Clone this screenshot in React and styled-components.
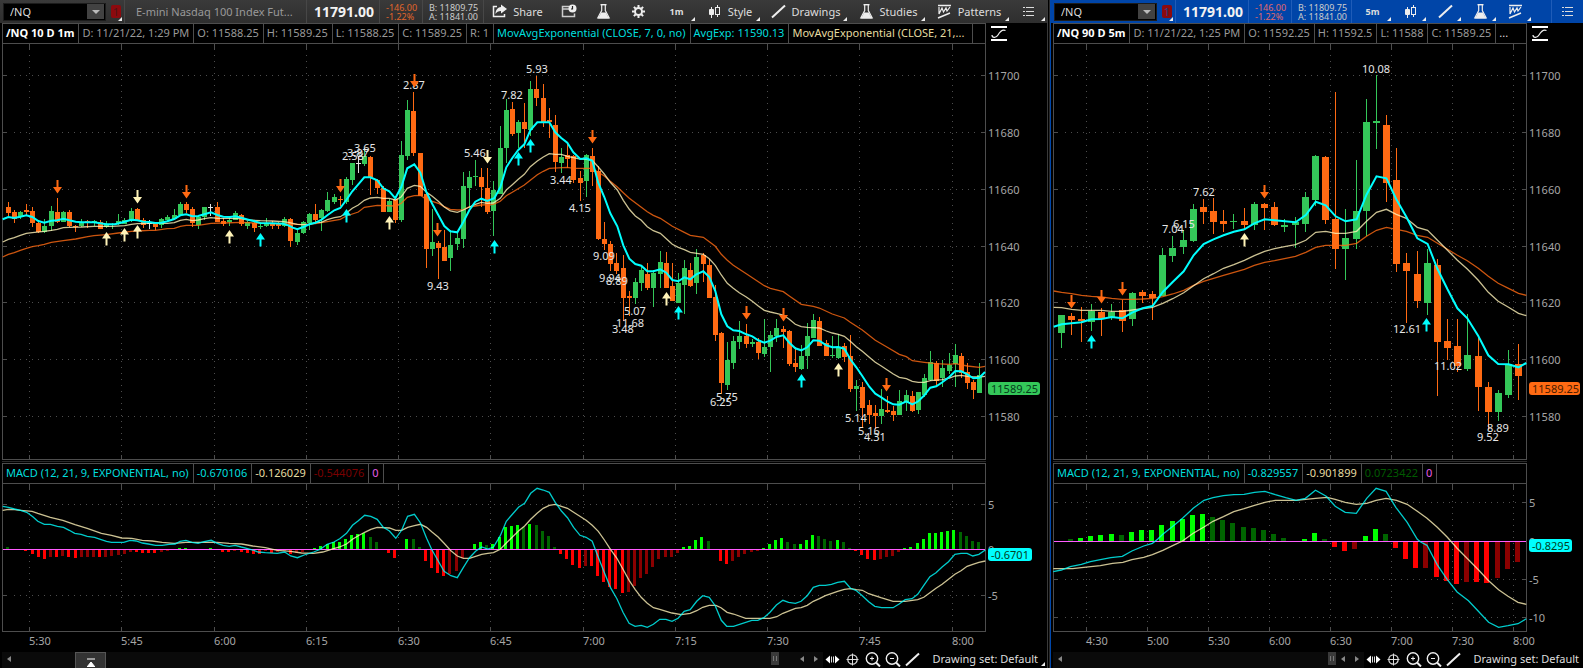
import React, { useLayoutEffect, useRef, useState } from 'react';
import styled, { createGlobalStyle } from 'styled-components';

const GREEN = '#34c759';
const ORANGE = '#ff6a13';
const CREAM = '#fff3b8';
const CYAN = '#00ffff';
const FRAME = '#4d4d4d';

const GlobalStyle = createGlobalStyle`
  * {
    box-sizing: border-box;
  }

  body {
    margin: 0;
    background: #000;
    color: #ddd;
    font-family: "Noto Sans", "Open Sans", sans-serif;
    font-size: 11px;
    line-height: 14px;
  }

  button, input {
    font: inherit;
    color: inherit;
  }
`;

const Workspace = styled.main`
  display: flex;
  height: 100vh;
  min-height: 400px;
  overflow: hidden;
`;

const Panel = styled.section`
  flex: ${(p) => p.$grow} 1 ${(p) => p.$grow}px;
  min-width: 0;
  display: flex;
  flex-direction: column;
  border-left: ${(p) => (p.$active ? '1px solid #0047ab' : 'none')};
`;

const Divider = styled.div`
  flex: none;
  width: 3px;
  border-left: 1px solid #3a3a3a;
  border-right: 1px solid #2a2a2a;
`;

const Toolbar = styled.div`
  flex: none;
  display: flex;
  height: 23px;
  color: #ddd;
  background: ${(p) => (p.$active ? '#0045a8' : 'linear-gradient(#3a3a3a, #2e2e2e)')};

  & > * {
    border-right: 1px solid ${(p) => (p.$active ? '#1f5cb8' : '#474747')};
  }

  & > *:last-child {
    border-right: none;
  }
`;

const SymbolGroup = styled.form`
  flex: none;
  display: flex;
  align-items: center;
  gap: 5px;
  width: 125px;
  padding-left: 3px;
  position: relative;
`;

const SymbolBox = styled.div`
  display: flex;
  align-items: center;
  width: 103px;
  height: 18px;
  padding-right: 1px;
  background: #000;
  border: 1px solid #1c1c1c;
`;

const SymbolInput = styled.input`
  flex: 1;
  min-width: 0;
  height: 16px;
  padding: 0 0 0 6px;
  border: none;
  outline: none;
  background: transparent;
`;

const DropButton = styled.button`
  display: flex;
  align-items: center;
  justify-content: center;
  width: 17px;
  height: 15px;
  padding: 0;
  border: none;
  background: #424242;
`;

const LinkBadge = styled.button`
  width: 10px;
  height: 13px;
  padding: 0;
  border: none;
  border-radius: 2px;
  background: #8c0a0e;
  color: ${(p) => (p.$active ? '#2b3f8c' : '#4d1518')};
  line-height: 13px;
`;

const Corner = styled.span`
  position: absolute;
  right: 2px;
  bottom: 2px;
  border-left: 4px solid transparent;
  border-bottom: 4px solid #eee;
`;

const Description = styled.div`
  flex: 1;
  min-width: 0;
  padding: 0 11px;
  line-height: 23px;
  color: #999;
  white-space: nowrap;
  overflow: hidden;
`;

const LastPrice = styled.div`
  flex: none;
  width: 73px;
  padding-left: 7px;
  font-size: 14px;
  font-weight: 700;
  line-height: 24px;
  color: #f2f2f2;
`;

const Stack = styled.div`
  flex: none;
  display: flex;
  flex-direction: column;
  justify-content: center;
  width: ${(p) => p.$width}px;
  padding-left: 6px;
  font-size: 9px;
  line-height: 9px;
  color: ${(p) => p.$color};
  white-space: nowrap;
`;

const ToolButton = styled.button`
  flex: none;
  position: relative;
  display: flex;
  align-items: center;
  justify-content: center;
  gap: 5px;
  width: ${(p) => p.$width}px;
  padding: 0;
  border: none;
  background: transparent;
  font-size: ${(p) => (p.$period ? 9 : 11)}px;
  font-weight: ${(p) => (p.$period ? 700 : 400)};
`;

const Filler = styled.div`
  flex: 1;
`;

const Body = styled.div`
  flex: 1;
  min-height: 0;
  display: flex;
  flex-direction: column;
  padding-left: 2px;
`;

const HeaderRow = styled.div`
  flex: none;
  display: flex;
  height: 21px;
`;

const HeaderCells = styled.dl`
  flex: 1;
  min-width: 0;
  display: flex;
  margin: 0;
  overflow: hidden;
  border: 1px solid ${FRAME};
`;

const HeaderCell = styled.div`
  flex: ${(p) => (p.$fill ? '1 1 0' : 'none')};
  min-width: 0;
  padding: 0 4px 0 3px;
  border-right: ${(p) => (p.$open ? 'none' : `1px solid ${FRAME}`)};
  margin-right: ${(p) => (p.$fill && !p.$open ? 12 : 0)}px;
  color: ${(p) => p.$color || '#999'};
  font-weight: ${(p) => (p.$bold ? 700 : 400)};
  line-height: 18px;
  white-space: nowrap;
  overflow: hidden;
`;

const HeaderSide = styled.div`
  flex: none;
  width: ${(p) => p.$width}px;
  padding: 3px 0 0 5px;
`;

const CurveButton = styled.button`
  display: block;
  padding: 0;
  border: none;
  background: none;
`;

const Splitter = styled.div`
  flex: none;
  height: 3px;
  margin-right: ${(p) => p.$side}px;
  border-bottom: 1px solid #000;
  background: #2a2a2a;
  border-top: 1px solid #000;
`;

const ChartBox = styled.div`
  flex: ${(p) => p.$grow} 1 0;
  min-height: 0;
  overflow: hidden;

  svg {
    display: block;
  }

  text {
    font-size: 11px;
    fill: #a6a6a6;
  }

  text.note {
    fill: #e6e6e6;
    text-anchor: middle;
  }

  text.tag {
    fill: ${(p) => p.$tagText};
  }
`;

const BottomBar = styled.div`
  flex: none;
  display: flex;
  align-items: flex-start;
  height: 16px;
  padding-left: 2px;
`;

const ScrollTrack = styled.div`
  flex: 1;
  display: flex;
  align-items: flex-start;
  align-self: stretch;
  background: #0a0a0a;
`;

const ScrollButton = styled.button`
  display: flex;
  align-items: center;
  justify-content: center;
  width: 14px;
  height: 13px;
  padding: 0;
  border: none;
  background: none;
`;

const CollapseButton = styled.button`
  display: flex;
  align-items: center;
  justify-content: center;
  width: 31px;
  height: 16px;
  margin-left: 59px;
  padding: 3px 0 0;
  border: 1px solid #555;
  border-bottom: none;
  background: #333;
`;

const Thumb = styled.div`
  width: 8px;
  height: 13px;
  margin: 0 ${(p) => p.$gap}px 0 auto;
  background: repeating-linear-gradient(90deg, #3a3a3a 0 2px, #777 2px 3px);
  border: solid #3a3a3a;
  border-width: 4px 0;
`;

const ChartTools = styled.div`
  flex: none;
  display: flex;
  align-items: center;
  gap: 4px;
  height: 15px;
  padding: 0 12px 0 2px;
`;

const IconButton = styled.button`
  display: flex;
  padding: 0;
  border: none;
  background: none;
`;

const DrawingSet = styled.button`
  position: relative;
  flex: none;
  height: 16px;
  padding: 0 ${(p) => p.$gap}px 2px 0;
  border: none;
  background: none;
  line-height: 14px;
`;

const ICONS = {
  share: (
    <>
      <path d="M5 2.5H1.5v10h11V10" fill="none" stroke="#eee" strokeWidth="1.5" />
      <path d="M9 0.5l6 4.5-6 4.5V7C6.500 7 4.500 8 3.500 10 3.500 6 6 3.200 9 3z" fill="#eee" />
    </>
  ),
  history: (
    <>
      <path d="M8 2.500H1.500v10h12V9.500M1.500 5H8" fill="none" stroke="#ccc" strokeWidth="1.5" />
      <circle cx="11.500" cy="4.500" r="4" fill="#eee" />
      <path d="M11.500 2v3h-1.500" fill="none" stroke="#222" strokeWidth="1.200" />
    </>
  ),
  flask: (
    <>
      <path d="M4.500 0.700h6" stroke="#eee" strokeWidth="1.400" />
      <path d="M5.700 1v5.500L1.800 13.800h11.400L9.300 6.500V1" fill="none" stroke="#eee" strokeWidth="1.200" />
      <path d="M5.200 8.500h4.600l3.200 6H2z" fill="#eee" />
    </>
  ),
  gear: (
    <>
      <circle cx="7.500" cy="7.500" r="3.500" fill="none" stroke="#eee" strokeWidth="2" />
      <path
        d="M7.500 1v2.500M7.500 11.500V14M1 7.500h2.500M11.500 7.500H14M2.900 2.900l1.800 1.800M10.300 10.300l1.800 1.800M12.100 2.900l-1.800 1.800M4.700 10.300l-1.800 1.800"
        stroke="#eee"
        strokeWidth="2"
      />
    </>
  ),
  style: (
    <>
      <path d="M4.500 3v11M10.500 1v3M10.500 10v3" stroke="#eee" />
      <rect x="2" y="5" width="5" height="6" rx="1" fill="#eee" />
      <rect x="8.500" y="3.500" width="4" height="7" fill="none" stroke="#eee" />
    </>
  ),
  line: <path d="M1 13.500L14 1.500" stroke="#eee" strokeWidth="2" />,
  patterns: (
    <>
      <path d="M1 1.500h13M1 14l12-5" stroke="#eee" strokeWidth="1.500" />
      <path d="M2 3v7l3-6 1.500 4L9 4l1 3 3-4" fill="none" stroke="#eee" strokeWidth="1.200" />
    </>
  ),
  list: (
    <path
      d="M2 3.500h2M2 7.500h2M2 11.500h2M5 3.500h8M5 7.500h8M5 11.500h8"
      stroke="#ddd"
      strokeWidth="1.200"
    />
  ),
  curve: (
    <>
      <path d="M0 1h16M0 14h16" stroke="#fff" strokeWidth="2" />
      <path d="M1 9c0 3 4 3.500 6 0s4-6 7.500-4.500" fill="none" stroke="#eee" strokeWidth="1.200" />
    </>
  ),
  pan: (
    <>
      <path d="M0.500 7.500L5 3.500v8zM14.500 7.500L10 3.500v8z" fill="#fff" />
      <path d="M6.500 4.500v6M8.500 4.500v6" stroke="#ddd" />
    </>
  ),
  target: (
    <>
      <circle cx="7.500" cy="7.500" r="4.700" fill="none" stroke="#ddd" strokeWidth="1.200" />
      <path d="M7.500 1.500v12M1.500 7.500h12" stroke="#ddd" />
    </>
  ),
  zoomIn: (
    <>
      <circle cx="7" cy="6.500" r="5.700" fill="none" stroke="#eee" strokeWidth="1.400" />
      <path d="M7 4.500v4M5 6.500h4" stroke="#eee" />
      <path d="M11 10.500l4 4" stroke="#eee" strokeWidth="2" />
    </>
  ),
  zoomOut: (
    <>
      <circle cx="7" cy="6.500" r="5.700" fill="none" stroke="#eee" strokeWidth="1.400" />
      <path d="M5 6.500h4" stroke="#eee" />
      <path d="M11 10.500l4 4" stroke="#eee" strokeWidth="2" />
    </>
  ),
};

const Icon = ({ name, size = 15 }) => (
  <svg width={size + 1} height={size} viewBox={`0 0 ${size + 1} ${size}`} aria-hidden="true">
    {ICONS[name]}
  </svg>
);

// x, y pairs separated by spaces; offset shifts every x
const pts = (text, offset = 0) =>
  text.trim().split(/\s+/).map((pair) => {
    const [x, y] = pair.split(',').map(Number);
    return [x + offset, y];
  });

// colour, x, high, body top, body bottom, low
const candles = (text, offset = 0) =>
  text.trim().split(/\s+/).map((item) => {
    const [x, high, top, bottom, low] = item.slice(1).split(',').map(Number);
    return { kind: item[0], x: x + offset, high, top, bottom, low };
  });

const minuteCandles = [
  ...candles(`O25,426,441,459,470 O43,450,456,479,491 G61,453,456,473,478 O79,432,450,456,466
    O97,441,453,491,503 O115,486,489,517,521 G133,477,500,518,520 G154,438,453,500,515
    O172,414,456,486,491 G190,453,456,487,488 O208,450,456,498,503 O227,495,498,501,516
    G245,477,486,500,503 O263,480,484,487,504 G282,482,484,488,498 O301,480,486,507,508
    G319,484,496,503,506 G337,490,494,497,509 G355,462,483,494,496 G374,476,480,492,494
    G394,444,453,483,486 O412,444,447,480,484 O430,474,482,495,506 W448,480,490,493,508
    O466,486,490,501,510 G484,476,478,497,506 G502,466,471,480,484 G523,447,465,479,482
    G541,426,432,466,470 O559,428,432,450,459 O577,441,447,491,503 G595,470,473,495,509
    G613,441,441,473,480 W631,432,441,444,468 O652,426,441,486,488 O670,474,483,492,500
    G688,474,480,486,498 G706,453,459,480,482 O724,462,465,494,500 G742,484,488,500,509
    O763,488,490,506,517 G781,492,498,503,509 G799,476,490,500,502 O817,484,490,498,508
    O835,486,491,500,509 G853,471,477,500,502 O871,476,477,545,563 G892,508,519,548,556
    G910,484,486,521,524 G928,459,462,489,512 O946,432,462,480,494 G964,447,450,474,515
    G982,396,420,455,456 G1003,402,411,426,432 O1021,408,417,422,440`),
  ...candles(`G79,351,357,426,432 G97,309,309,360,375 W115,288,309,312,339 G133,264,288,312,320
    O151,288,291,351,405 O172,357,360,384,403 O190,380,384,456,458 G208,417,423,456,458
    O226,414,418,480,490 G244,243,285,480,487 G262,120,150,288,300 O280,96,153,281,289
    O301,279,279,408,410 O319,400,402,567,626 G337,447,546,567,590 O355,543,549,564,658
    O373,510,561,603,605 G391,510,555,594,635 G412,516,534,552,570 G430,338,378,537,566
    G448,333,351,384,444 G466,300,348,353,378 O484,324,351,381,442 O502,324,384,456,464
    G520,364,390,453,530 G541,198,264,402,404 G559,117,150,264,310 O577,126,147,222,230
    G595,181,186,219,265 O613,129,186,207,266 G631,63,87,210,228 O649,48,87,114,138
    O670,72,114,187,203 O688,144,180,187,236 O706,165,195,306,338 G724,264,291,309,340
    O742,246,286,297,324 O760,285,290,360,369 O781,333,354,369,423 G799,283,285,363,411
    O817,265,288,336,378 O835,320,333,537,542 O853,486,537,552,570 O871,543,552,612,633
    O889,579,609,633,643 O910,585,624,714,784 O928,693,708,714,770 G946,655,666,714,734
    G964,618,630,669,695 O982,609,642,684,692`, 960),
  ...candles(`G40,630,639,684,743 G61,573,606,642,686 O79,576,609,684,686 O97,609,678,723,725
    G115,640,669,729,730 G133,600,624,675,762 O151,609,630,678,683 G169,567,591,669,704
    O190,580,585,612,668 O208,597,615,714,715 O226,675,711,825,845 O244,816,819,969,1004
    G262,847,900,975,992 G280,830,843,909,928 G298,783,828,846,868 O319,793,828,852,866
    G337,838,846,852,861 O355,834,848,879,898 G373,777,861,882,891 G391,815,825,861,936
    G409,777,804,830,848 O430,798,807,816,864 O448,810,813,912,918 O466,863,909,921,936
    G484,855,888,927,930 G502,789,828,888,928 G520,762,780,834,835 O538,771,783,858,859
    O559,840,850,888,890 G577,829,887,890,896 G595,823,862,894,898 O613,850,858,891,908
    O631,827,888,987,998 G649,960,978,987,1053 O667,967,981,1044,1105 O688,1021,1036,1065,1092
    O706,1035,1059,1068,1108 G724,989,1047,1068,1094 O742,1010,1050,1056,1060
    O760,1038,1053,1065,1085 G778,992,1025,1065,1066 G799,990,1005,1026,1053
    O817,994,1008,1053,1058 G835,996,998,1050,1063 G853,942,954,1006,1012 G871,873,908,960,964
    O889,905,909,963,978 G907,900,924,954,983 G928,879,915,933,944 G946,852,885,914,983
    O964,879,888,939,955 O982,910,936,969,987 O1000,960,966,990,1019 G1018,909,945,999,1000`, 1920),
];

const minuteFast = [
  ...pts(`8,478 25,471 43,474 61,470 79,466 97,471 115,483 133,488 154,482 172,481 190,476 208,481
    227,485 245,487 282,487 319,493 345,493 374,485 394,479 412,481 430,485 448,486 466,489
    484,488 502,484 523,477 541,466 559,463 577,469 595,468 613,463 633,457 652,465 670,470
    690,471 706,469 724,473 745,479 763,484 781,489 817,490 850,491 865,496 878,503 892,508
    910,501 928,493 946,488 964,480 982,466 1003,451 1021,444`),
  ...pts(`79,420 97,394 115,373 133,352 151,352 172,361 190,385 208,394 226,415 244,381 262,325
    283,313 301,338 319,396 337,432 355,465 373,498 391,514 412,517 430,486 448,451 466,425
    484,416 502,423 523,415 541,382 559,322 577,294 595,270 613,253 631,211 652,187 688,187
    706,217 724,234 742,248 760,277 781,297 799,295 817,302 835,369 853,411 871,460 892,499
    910,556 928,596 946,612 964,617 982,634 1000,634`, 960),
  ...pts(`61,628 79,638 97,660 115,664 133,652 151,658 169,643 190,634 208,651 226,693 244,763
    262,799 280,811 298,813 319,823 337,829 355,841 373,848 391,842 409,831 430,826 448,848
    466,865 484,871 502,862 520,841 538,842 559,856 577,862 595,861 613,866 631,898 649,922
    667,948 688,980 706,1001 724,1012 742,1024 760,1033 778,1034 799,1024 817,1033 835,1024
    853,1006 871,983 889,979 907,967 928,951 946,933 964,934 982,943 1000,955 1018,953 1035,936`, 1920),
];

const minuteMid = [
  ...pts(`8,546 25,538 43,533 61,526 79,520 97,518 133,514 154,511 172,508 190,503 208,502 245,501
    282,499 337,499 374,497 394,493 412,491 448,490 502,490 523,488 541,481 559,478 577,482
    595,480 613,476 633,473 652,475 690,475 724,476 745,480 781,482 817,483 850,485 865,487
    892,493 910,494 928,493 946,488 964,487 982,479 1003,473 1021,470`),
  ...pts(`79,459 97,445 115,435 133,421 151,414 172,412 190,415 208,415 226,420 244,410 262,385
    283,376 301,379 319,396 337,409 355,424 373,441 391,453 412,457 430,450 448,441 466,433
    484,427 502,430 520,429 541,415 559,390 577,374 595,358 613,343 631,320 652,303 670,291
    688,281 706,283 724,283 742,289 760,293 781,297 799,298 817,301 835,321 853,342 871,367
    892,390 910,421 928,448 946,468 964,481 982,500 1000,512`, 960),
  ...pts(`61,520 79,536 97,553 115,562 133,569 151,577 190,583 208,596 226,616 244,645 262,670
    280,685 298,698 319,711 337,724 355,738 373,751 391,756 409,760 430,765 448,778 466,793
    484,800 502,802 538,804 559,813 577,819 595,823 613,829 631,844 649,860 667,874 688,892
    706,907 724,918 742,930 760,942 778,952 799,956 817,964 835,967 853,967 871,962 907,959
    928,954 946,948 964,946 982,949 1000,951 1018,951 1035,949`, 1920),
];

const minuteSlow = [
  ...pts(`8,591 25,583 43,578 61,571 79,565 97,560 115,557 133,553 154,547 190,542 227,537 263,530
    282,527 319,524 355,519 394,514 412,513 448,511 466,511 502,506 523,505 541,499 559,496
    595,496 633,490 670,489 724,487 763,489 817,491 853,491 910,494 946,491 982,485 1021,478`),
  ...pts(`79,468 115,456 133,442 172,436 226,438 244,430 262,412 283,407 301,406 319,418 337,424
    355,430 373,440 391,448 412,450 430,449 448,441 484,435 520,433 541,424 559,407 577,397
    613,375 631,361 652,344 670,334 688,325 742,322 760,325 817,325 835,337 853,348 871,364
    892,381 910,398 928,415 964,442`, 960),
  ...pts(`22,455 40,466 61,475 79,487 97,499 133,517 151,526 190,532 208,545 226,559 244,583
    262,601 280,616 319,641 373,677 391,685 430,695 448,708 484,733 520,739 538,744 577,762
    613,774 631,787 667,810 706,841 742,862 778,883 799,890 817,902 853,907 889,911 928,913
    946,911 982,918 1018,922 1035,919`, 1920),
];

const minuteMacd = [
  ...pts(`8,154 25,157 43,162 61,166 79,172 97,185 112,199 131,208 149,208 170,214 188,217 205,226
    221,235 240,238 258,244 280,247 297,253 315,259 330,262 366,262 385,256 403,258 421,264
    439,267 460,271 480,271 500,268 518,267 533,259 550,256 568,262 586,265 604,260 625,256
    643,265 660,271 678,274 696,271 714,276 730,280 748,285 764,291 785,293 820,295 842,291
    860,303 880,308 900,300 928,291 948,283 968,268 988,261 1005,251 1025,235 1043,211 1060,197
    1079,181 1097,184 1116,193 1133,216 1152,228 1171,250 1188,226 1206,184 1226,178 1244,204
    1262,250 1278,285 1296,317 1314,349 1334,362 1353,368 1371,337 1389,308 1407,289 1425,276
    1443,282 1460,276 1480,242 1498,199 1516,178 1534,157`),
  ...pts(`14,145 32,115 51,100 69,105 87,112 105,143 123,168 141,188 159,217 178,241 196,247
    214,259 232,307 250,353 268,398 287,431 305,472 323,505 341,514 359,511 377,517 395,508
    414,493 432,493 450,499 468,490 486,469 504,464 523,439 541,422 560,427 578,452 596,496
    612,514 632,514 686,496 704,496 722,488 740,472 759,450 778,436 795,442 815,445 832,439
    850,422 868,397 886,391 904,391 922,388 940,382 960,379 978,400 996,407 1013,422 1032,440
    1050,454 1070,458 1104,458 1122,447 1140,434 1160,431 1177,418 1195,391 1213,365 1231,353
    1249,336 1268,320 1287,298 1305,295 1323,295 1340,303 1358,298 1377,285`, 1538),
];

const minuteSignal = [
  ...pts(`8,166 25,163 43,164 61,166 95,169 112,175 149,187 186,196 222,209 258,220 300,235 330,241
    360,249 390,250 421,256 450,258 480,262 515,265 550,262 604,262 643,262 678,265 715,267
    748,273 785,278 820,286 860,289 892,294 928,295 955,291 980,283 1005,276 1025,267 1043,253
    1060,242 1079,232 1097,223 1116,217 1152,219 1171,226 1188,226 1206,217 1226,212 1244,208
    1262,217 1278,231 1296,246 1314,265 1334,287 1353,303 1371,310 1389,310 1407,304 1425,298
    1443,295 1460,293 1480,283 1498,264 1516,246 1534,228`),
  ...pts(`14,213 32,193 51,175 69,160 87,151 105,148 123,154 141,160 159,172 196,196 214,211
    232,229 250,255 268,283 287,310 305,343 323,376 341,403 359,427 377,445 395,458 414,463
    450,474 478,479 504,475 523,467 541,457 560,451 580,451 595,458 613,472 632,477 668,490
    740,490 760,485 778,475 815,460 832,458 850,451 868,439 886,431 904,422 940,409 960,403
    978,401 996,404 1013,406 1032,416 1068,428 1104,439 1140,439 1177,434 1195,427 1213,413
    1231,400 1249,388 1268,373 1287,358 1305,347 1323,334 1340,328 1358,322 1377,318`, 1538),
];

const minuteBars = [
  6, 0, -2, -4, -13, -23, -28, -22, -23, -20, -23, -26, -24, -23, -22, -23, -22, -20, -17, -14,
  -8, -9, -10, -11, -12, -8, -4, -2, 3, 4, -1, -2, 0, 4, -2, -8, -9, -5, -8, -10, -13, -14, -5,
  -10, -9, -6, -13, -12, -9, -2, 4, 9, 16, 22, 23, 31, 43, 46, 49, 37, 22, -2, -11, -26, -3, 31,
  30, 7, -35, -56, -71, -80, -75, -65, -27, -3, 16, 22, 13, 16, 37, 67, 70, 73, 67, 76, 73, 55,
  40, 7, -14, -29, -47, -56, -50, -51, -80, -98, -113, -119, -131, -128, -110, -87, -75, -53, -29,
  -23, -23, -11, 7, 10, 28, 37, 25, 0, -35, -44, -35, -23, -14, -8, -5, 4, 16, 28, 34, 22, 16, 17,
  28, 43, 40, 31, 25, 28, 22, 3, -5, -17, -29, -32, -29, -23, -20, -8, 4, 7, 19, 31, 49, 50, 52,
  55, 58, 52, 40, 25, 22,
];

const fiveCandles = candles(`G48,765,765,819,864 O77,760,768,780,825 O106,741,777,783,846
  G135,732,753,786,815 O164,744,756,777,828 G194,732,756,774,780 O225,720,750,783,816
  G255,696,699,777,798 O284,690,696,708,729 O313,693,702,715,780 G343,565,585,708,709
  G372,528,564,588,606 G404,510,540,561,582 G433,432,447,543,546 O462,417,441,456,492
  O491,414,453,486,522 O520,450,483,492,516 G550,462,483,488,508 O581,444,483,495,510
  G610,426,432,495,510 O640,430,432,444,510 O669,426,441,495,500 G698,477,495,501,516
  G730,471,487,495,564 G760,396,411,492,516 G789,285,288,420,440 O818,288,291,480,492
  O847,96,477,567,627 G876,447,534,567,660 G908,300,453,537,567 G937,117,186,453,530
  G966,45,183,189,267 O995,165,195,369,426 O1024,264,360,612,636 O1053,579,609,633,789
  O1085,573,642,723,744 G1115,567,609,729,766 O1144,597,615,846,1008 O1173,777,843,864,900
  O1202,777,858,918,936 G1231,762,885,927,934 O1263,834,888,981,1055 O1292,966,981,1056,1112
  G1321,990,999,1056,1085 G1351,872,912,1005,1014 O1380,852,912,948,1020`);

const fiveFast = pts(`25,800 48,793 77,790 106,787 135,778 164,777 194,771 225,775 255,757 284,745
  313,738 343,696 372,666 404,634 433,586 462,552 491,538 520,526 550,515 581,508 610,490 640,478
  669,481 730,487 760,465 789,425 818,436 847,469 876,484 908,478 937,404 966,349 995,355
  1024,418 1053,470 1085,535 1115,552 1144,627 1173,688 1202,745 1231,775 1263,828 1292,886
  1321,912 1351,913 1380,922 1403,909`);

const fiveMid = pts(`25,742 48,743 77,748 106,751 164,751 194,754 225,754 255,750 313,742 343,730
  372,716 404,698 433,677 462,656 491,641 520,625 550,614 581,601 610,587 640,574 669,566 698,560
  730,554 760,541 789,517 818,514 847,520 876,520 908,514 937,484 966,457 995,448 1024,463
  1053,475 1085,502 1115,511 1144,541 1173,571 1202,601 1231,627 1263,661 1292,697 1321,724
  1351,742 1380,760 1403,767`);

const fiveSlow = pts(`25,693 48,697 77,701 106,706 135,709 164,711 194,715 225,718 255,718 284,717
  313,715 343,710 372,702 404,691 433,676 462,664 520,646 581,628 610,616 640,607 669,602 730,589
  760,577 789,562 818,556 876,556 908,550 937,529 966,511 995,502 1024,508 1053,514 1085,526
  1115,532 1144,550 1173,568 1202,586 1231,602 1263,625 1292,649 1321,670 1351,685 1380,700
  1403,706`);

const fiveMacd = pts(`39,350 62,345 88,335 120,328 146,320 175,314 205,308 238,304 266,288 300,273
  325,265 340,253 355,238 385,213 412,190 443,160 474,136 500,128 530,122 560,119 590,118 620,112
  650,109 680,119 710,128 740,136 767,130 796,106 827,124 853,154 882,172 914,175 944,130 971,100
  1000,109 1028,157 1061,202 1090,253 1100,261 1118,271 1147,328 1176,373 1205,411 1238,437
  1265,467 1296,502 1325,517 1352,512 1381,506 1405,491`);

const fiveSignal = pts(`39,341 95,341 120,338 175,332 210,325 240,322 266,314 300,307 325,299
  355,286 385,271 412,258 443,235 474,216 500,199 530,185 560,170 590,161 620,151 650,142 680,136
  740,136 796,130 830,127 853,133 882,142 914,148 944,145 971,136 1000,130 1030,136 1061,148
  1090,169 1118,190 1147,216 1176,246 1205,280 1238,314 1265,343 1296,377 1325,404 1352,424
  1381,442 1405,448`);

const fiveBars = [
  7, 10, 16, 19, 22, 19, 28, 34, 35, 49, 61, 67, 79, 82, 73, 64, 55, 43, 40, 34, 22, 10, 0, 7, 25,
  7, -17, -29, -22, 16, 37, 22, -20, -53, -80, -80, -107, -119, -128, -122, -123, -125, -110, -83,
  -62,
];

const shift = (list, offset) => list.map(([x, ...rest]) => [x + offset, ...rest]);

const priceLevels = [
  [46, '11700'], [217, '11680'], [388, '11660'], [559, '11640'],
  [727, '11620'], [898, '11600'], [1069, '11580'],
];

const leftPrice = {
  domain: [6, 2955, -48, 1197],
  candleWidth: 5,
  candles: minuteCandles,
  lines: [
    [minuteSlow, ORANGE, 1],
    [minuteMid, CREAM, 1],
    [minuteFast, CYAN, 2],
  ],
  columns: [88, 364, 643, 919, 1195, 1471, 1750, 2026, 2302, 2578, 2857],
  levels: priceLevels,
  tag: { y: 985, text: '11589.25', color: GREEN, width: 52 },
  // x, top of the arrow, direction, colour
  arrows: [
    [171, 360, 'down', ORANGE], [558, 375, 'down', ORANGE], [411, 390, 'down', CREAM],
    [318, 516, 'up', CREAM], [372, 504, 'up', CREAM], [411, 496, 'up', CREAM],
    [687, 510, 'up', CREAM], [780, 519, 'up', CYAN],
    ...shift([
      [60, 357, 'down', ORANGE], [282, 42, 'down', ORANGE], [353, 489, 'down', ORANGE],
      [816, 210, 'down', ORANGE], [501, 270, 'down', CREAM], [207, 468, 'up', CREAM],
      [78, 448, 'up', CYAN], [522, 541, 'up', CYAN], [594, 277, 'up', CYAN], [630, 237, 'up', CYAN],
    ], 960),
    ...shift([
      [318, 738, 'down', ORANGE], [429, 744, 'down', ORANGE], [740, 954, 'down', ORANGE],
      [78, 697, 'up', CREAM], [594, 910, 'up', CREAM], [114, 739, 'up', CYAN],
      [483, 943, 'up', CYAN],
    ], 1920),
  ],
  notes: [
    ...shift([
      [98, 288, '2.58'], [115, 279, '3.87'], [134, 265, '3.65'], [283, 76, '2.87'],
      [466, 280, '5.46'], [577, 106, '7.82'], [652, 28, '5.93'], [355, 679, '9.43'],
      [724, 361, '3.44'], [781, 445, '4.15'], [852, 588, '9.09'], [870, 655, '9.94'],
      [891, 664, '8.89'], [946, 754, '5.07'], [929, 790, '11.68'], [910, 808, '3.48'],
    ], 960),
    ...shift([
      [244, 1027, '6.25'], [262, 1012, '5.75'], [649, 1075, '5.14'], [688, 1114, '5.16'],
      [706, 1132, '4.31'],
    ], 1920),
  ],
};

const leftMacd = {
  domain: [6, 2914, 87, 528],
  bars: { start: 22, step: 18.18, width: 3, zero: 283, values: minuteBars },
  lines: [
    [minuteSignal, CREAM, 1],
    [minuteMacd, CYAN, 1],
  ],
  columns: [87, 359, 634, 906, 1178, 1451, 1725, 1998, 2270, 2542, 2817],
  times: ['5:30', '5:45', '6:00', '6:15', '6:30', '6:45', '7:00', '7:15', '7:30', '7:45', '8:00'],
  levels: [[148, '5'], [283, '0'], [421, '-5']],
  tag: { y: 298, text: '-0.6701', color: CYAN, width: 44 },
};

const rightPrice = {
  domain: [23, 1402, -48, 1197],
  candleWidth: 7,
  candles: fiveCandles,
  lines: [
    [fiveSlow, ORANGE, 1],
    [fiveMid, CREAM, 1],
    [fiveFast, CYAN, 2],
  ],
  columns: [120, 298, 476, 654, 832, 1009, 1187, 1365],
  levels: priceLevels,
  tag: { y: 985, text: '11589.25', color: ORANGE, width: 51 },
  arrows: [
    [76, 705, 'down', ORANGE], [163, 690, 'down', ORANGE], [224, 666, 'down', ORANGE],
    [638, 375, 'down', ORANGE], [580, 519, 'up', CREAM], [134, 826, 'up', CYAN],
    [1113, 774, 'up', CYAN],
  ],
  notes: [
    [374, 508, '7.04'], [404, 493, '6.15'], [462, 397, '7.62'], [966, 28, '10.08'],
    [1055, 808, '12.61'], [1174, 919, '11.02'], [1321, 1105, '8.89'], [1292, 1132, '9.52'],
  ],
};

const rightMacd = {
  domain: [38, 1404, 87, 528],
  bars: { start: 88, step: 29.34, width: 5, zero: 259, values: fiveBars },
  lines: [
    [fiveSignal, CREAM, 1],
    [fiveMacd, CYAN, 1],
  ],
  columns: [134, 310, 486, 662, 838, 1014, 1191, 1367],
  times: ['4:30', '5:00', '5:30', '6:00', '6:30', '7:00', '7:30', '8:00'],
  levels: [[142, '5'], [259, '0'], [373, '-5'], [488, '-10']],
  tag: { y: 271, text: '-0.8295', color: CYAN, width: 43 },
};

const useSize = () => {
  const ref = useRef(null);
  const [size, setSize] = useState(null);

  useLayoutEffect(() => {
    const measure = () =>
      setSize({ width: ref.current.clientWidth, height: ref.current.clientHeight });
    measure();
    const observer = new ResizeObserver(measure);
    observer.observe(ref.current);
    return () => observer.disconnect();
  }, []);

  return [ref, size];
};

const candleColor = { G: GREEN, O: ORANGE, W: '#e0e0e0' };

const barColor = (value, previous) => {
  if (value >= 0) return value > previous ? '#00ff00' : '#006400';
  return value < previous ? '#ff0000' : '#8b0000';
};

const Arrow = ({ x, y, direction, color }) => {
  const d =
    direction === 'up'
      ? `M${x} ${y}l4.500 6.500h-3.500v7h-2v-7h-3.500z`
      : `M${x} ${y + 13.5}l4.500 -6.500h-3.500v-7h-2v7h-3.500z`;
  return <path d={d} fill={color} />;
};

const Chart = ({ data, grow, side, footer = 0, label }) => {
  const [ref, size] = useSize();
  const w = size ? size.width - side : 0;
  const h = size ? size.height - footer : 0;
  const [x0, x1, y0, y1] = data.domain;
  const sx = (x) => ((x - x0) / (x1 - x0)) * (w - 1);
  const sy = (y) => ((y - y0) / (y1 - y0)) * (h - 1);
  const px = (x) => Math.floor(sx(x) + 0.1);
  const py = (y) => Math.floor(sy(y) + 0.1);
  const tagText = data.tag.color === ORANGE ? '#4a1c00' : '#053d1c';

  return (
    <ChartBox ref={ref} $grow={grow} $tagText={tagText}>
      {size && (
        <svg width={size.width} height={size.height} role="img" aria-label={label}>
          <g stroke={FRAME} shapeRendering="crispEdges">
            {data.levels.map(([y]) => (
              <g key={y}>
                <path d={`M12 ${py(y) + 0.5}H${w - 6}`} strokeDasharray="1 5" />
                <path d={`M0 ${py(y) + 0.5}h5M${w - 5} ${py(y) + 0.5}h5`} />
              </g>
            ))}
            {data.columns.map((x) => (
              <g key={x}>
                <path d={`M${px(x) + 0.5} 5V${h - 6}`} strokeDasharray="1 5" />
                <path d={`M${px(x) + 0.5} 0v5M${px(x) + 0.5} ${h - 5}v5`} />
              </g>
            ))}
            <path d={`M0.500 0V${h - 0.5}H${w - 0.5}V0`} fill="none" />
          </g>

          {data.candles && (
            <g shapeRendering="crispEdges">
              {data.candles.map((c) => (
                <g key={c.x} fill={candleColor[c.kind]}>
                  <rect x={px(c.x)} y={py(c.high)} width="1" height={py(c.low) - py(c.high)} />
                  <rect
                    x={px(c.x) - (data.candleWidth - 1) / 2}
                    y={py(c.top)}
                    width={data.candleWidth}
                    height={Math.max(1, py(c.bottom) - py(c.top))}
                  />
                </g>
              ))}
            </g>
          )}

          {data.bars && (
            <g shapeRendering="crispEdges">
              {data.bars.values.map((v, i) => {
                const zero = py(data.bars.zero);
                const end = Math.round(sy(data.bars.zero - v));
                return (
                  <rect
                    key={i}
                    x={px(data.bars.start + i * data.bars.step) - (data.bars.width - 1) / 2}
                    y={Math.min(zero, end)}
                    width={data.bars.width}
                    height={Math.abs(zero - end)}
                    fill={barColor(v, i ? data.bars.values[i - 1] : 99)}
                  />
                );
              })}
              <rect x="1" y={py(data.bars.zero)} width={w - 2} height="1" fill="#ff5cff" />
            </g>
          )}

          {data.lines.map(([line, color, width]) => (
            <polyline
              key={color}
              points={line.map(([x, y]) => `${sx(x).toFixed(1)},${sy(y).toFixed(1)}`).join(' ')}
              fill="none"
              stroke={color}
              strokeWidth={width === 1 ? 1.3 : width}
              opacity={width === 1 ? 0.8 : 1}
            />
          ))}

          {data.notes?.map(([x, y, text]) => (
            <text key={text + x} className="note" x={Math.round(sx(x))} y={Math.round(sy(y)) + 4}>
              {text}
            </text>
          ))}
          {data.arrows?.map(([x, y, direction, color]) => (
            <Arrow key={`${x} ${y}`} x={px(x) + 0.5} y={py(y)} direction={direction} color={color} />
          ))}

          {data.levels.map(([y, text]) => (
            <text key={text} x={w + 2} y={py(y) + 5}>{text}</text>
          ))}
          <rect
            x={w + 2}
            y={py(data.tag.y) - 6}
            width={data.tag.width}
            height="13"
            rx="3"
            fill={data.tag.color}
          />
          <text className="tag" x={w + 5} y={py(data.tag.y) + 5}>{data.tag.text}</text>
          {data.times?.map((text, i) => (
            <text key={text} x={px(data.columns[i])} y={h + 13}>{text}</text>
          ))}
        </svg>
      )}
    </ChartBox>
  );
};

const SymbolPicker = ({ id, active }) => (
  <SymbolGroup onSubmit={(e) => e.preventDefault()}>
    <SymbolBox>
      <SymbolInput id={id} aria-label="Symbol" defaultValue="/NQ" />
      <DropButton type="button" aria-label="Recent symbols">
        <svg width="8" height="4" viewBox="0 0 8 4"><path d="M0 0h8L4 4z" fill="#bbb" /></svg>
      </DropButton>
    </SymbolBox>
    <LinkBadge type="button" $active={active} aria-label="Symbol link">1</LinkBadge>
    <Corner />
  </SymbolGroup>
);

const Tool = ({ icon, text, width, period, plain, label }) => (
  <ToolButton type="button" $width={width} $period={period} aria-label={text || label}>
    {icon && <Icon name={icon} />}
    {text}
    {!plain && <Corner />}
  </ToolButton>
);

const Quote = ({ active }) => (
  <>
    <LastPrice>11791.00</LastPrice>
    <Stack $width={43} $color={active ? '#e0696b' : '#e0662b'}>
      <span>-146.00</span>
      <span>-1.22%</span>
    </Stack>
    <Stack $width={active ? 60 : 61} $color="#ccc">
      <span>B: 11809.75</span>
      <span>A: 11841.00</span>
    </Stack>
  </>
);

const Header = ({ cells, side, curve, open, fillLast }) => (
  <HeaderRow>
    <HeaderCells>
      {cells.map(([text, color, bold], i) => (
        <HeaderCell
          key={text}
          $color={color}
          $bold={bold}
          $fill={fillLast && i === cells.length - 1}
          $open={open && i === cells.length - 1}
        >
          {text}
        </HeaderCell>
      ))}
    </HeaderCells>
    <HeaderSide $width={side}>
      {curve && (
        <CurveButton type="button" aria-label="Auto scale">
          <Icon name="curve" />
        </CurveButton>
      )}
    </HeaderSide>
  </HeaderRow>
);

const ScrollArrow = ({ left, label }) => (
  <ScrollButton type="button" aria-label={label}>
    <svg width="4" height="6" viewBox="0 0 4 6">
      <path d={left ? 'M4 0v6L0 3z' : 'M0 0v6l4-3z'} fill="#888" />
    </svg>
  </ScrollButton>
);

const Footer = ({ collapsible, thumbGap }) => (
  <BottomBar>
    <ScrollTrack>
      <ScrollArrow left label="Scroll back" />
      {collapsible && (
        <CollapseButton type="button" aria-label="Show panel">
          <svg width="8" height="9" viewBox="0 0 8 9">
            <path d="M0 1h8M4 4l4 5H0z" fill="#fff" stroke="#fff" strokeWidth="1" />
          </svg>
        </CollapseButton>
      )}
      <Thumb $gap={thumbGap} />
      <ScrollArrow left label="Previous bar" />
      <ScrollArrow label="Next bar" />
    </ScrollTrack>
    <ChartTools>
      {['pan', 'target', 'zoomIn', 'zoomOut', 'line'].map((name) => (
        <IconButton key={name} type="button" aria-label={name}>
          <Icon name={name} />
        </IconButton>
      ))}
    </ChartTools>
    <DrawingSet type="button" $gap={collapsible ? 9 : 4}>
      Drawing set: Default
      {collapsible && <Corner />}
    </DrawingSet>
  </BottomBar>
);

const App = () => (
  <>
    <GlobalStyle />
    <Workspace>
      <Panel $grow={1047}>
        <Toolbar>
          <SymbolPicker id="symbol-1m" />
          <Description>E-mini Nasdaq 100 Index Fut...</Description>
          <Quote />
          <Tool icon="share" text="Share" width={67} plain />
          <Tool icon="history" label="History" width={36} plain />
          <Tool icon="flask" label="Edit studies" width={34} plain />
          <Tool icon="gear" label="Settings" width={35} plain />
          <Tool text="1m" width={41} period />
          <Tool icon="style" text="Style" width={65} />
          <Tool icon="line" text="Drawings" width={87} />
          <Tool icon="flask" text="Studies" width={78} />
          <Tool icon="patterns" text="Patterns" width={84} />
          <Tool icon="list" label="Menu" width={36} />
        </Toolbar>
        <Body>
          <Header
            side={61}
            curve
            fillLast
            cells={[
              ['/NQ 10 D 1m', '#fff', true],
              ['D: 11/21/22, 1:29 PM'],
              ['O: 11588.25'],
              ['H: 11589.25'],
              ['L: 11588.25'],
              ['C: 11589.25'],
              ['R: 1'],
              ['MovAvgExponential (CLOSE, 7, 0, no)', '#00dede'],
              ['AvgExp: 11590.13', '#00dede'],
              ['MovAvgExponential (CLOSE, 21,...', '#e6dca0'],
            ]}
          />
          <Chart data={leftPrice} grow={416} side={61} label="/NQ one minute candles" />
          <Splitter $side={61} />
          <Header
            side={61}
            cells={[
              ['MACD (12, 21, 9, EXPONENTIAL, no)', '#00dede'],
              ['-0.670106', '#00dede'],
              ['-0.126029', '#e6dca0'],
              ['-0.544076', '#7a0000'],
              ['0', '#e65ce6'],
            ]}
          />
          <Chart data={leftMacd} grow={168} side={61} footer={20} label="MACD, one minute" />
        </Body>
        <Footer collapsible thumbGap={16} />
      </Panel>
      <Divider />
      <Panel $grow={533} $active>
        <Toolbar $active>
          <SymbolPicker id="symbol-5m" active />
          <Quote active />
          <Tool text="5m" width={41} period />
          <Tool icon="style" label="Style" width={35} />
          <Tool icon="line" label="Drawings" width={35} />
          <Tool icon="flask" label="Studies" width={35} />
          <Tool icon="patterns" label="Patterns" width={35} />
          <Filler />
          <Tool icon="list" label="Menu" width={31} plain />
        </Toolbar>
        <Body>
          <Header
            side={56}
            curve
            fillLast
            open
            cells={[
              ['/NQ 90 D 5m', '#fff', true],
              ['D: 11/21/22, 1:25 PM'],
              ['O: 11592.25'],
              ['H: 11592.5'],
              ['L: 11588'],
              ['C: 11589.25'],
              ['...', '#ddd'],
            ]}
          />
          <Chart data={rightPrice} grow={416} side={56} label="/NQ five minute candles" />
          <Splitter $side={56} />
          <Header
            side={56}
            cells={[
              ['MACD (12, 21, 9, EXPONENTIAL, no)', '#00dede'],
              ['-0.829557', '#00dede'],
              ['-0.901899', '#e6dca0'],
              ['0.0723422', '#005a00'],
              ['0', '#e65ce6'],
            ]}
          />
          <Chart data={rightMacd} grow={168} side={56} footer={20} label="MACD, five minutes" />
        </Body>
        <Footer thumbGap={0} />
      </Panel>
    </Workspace>
  </>
);

export default App;
